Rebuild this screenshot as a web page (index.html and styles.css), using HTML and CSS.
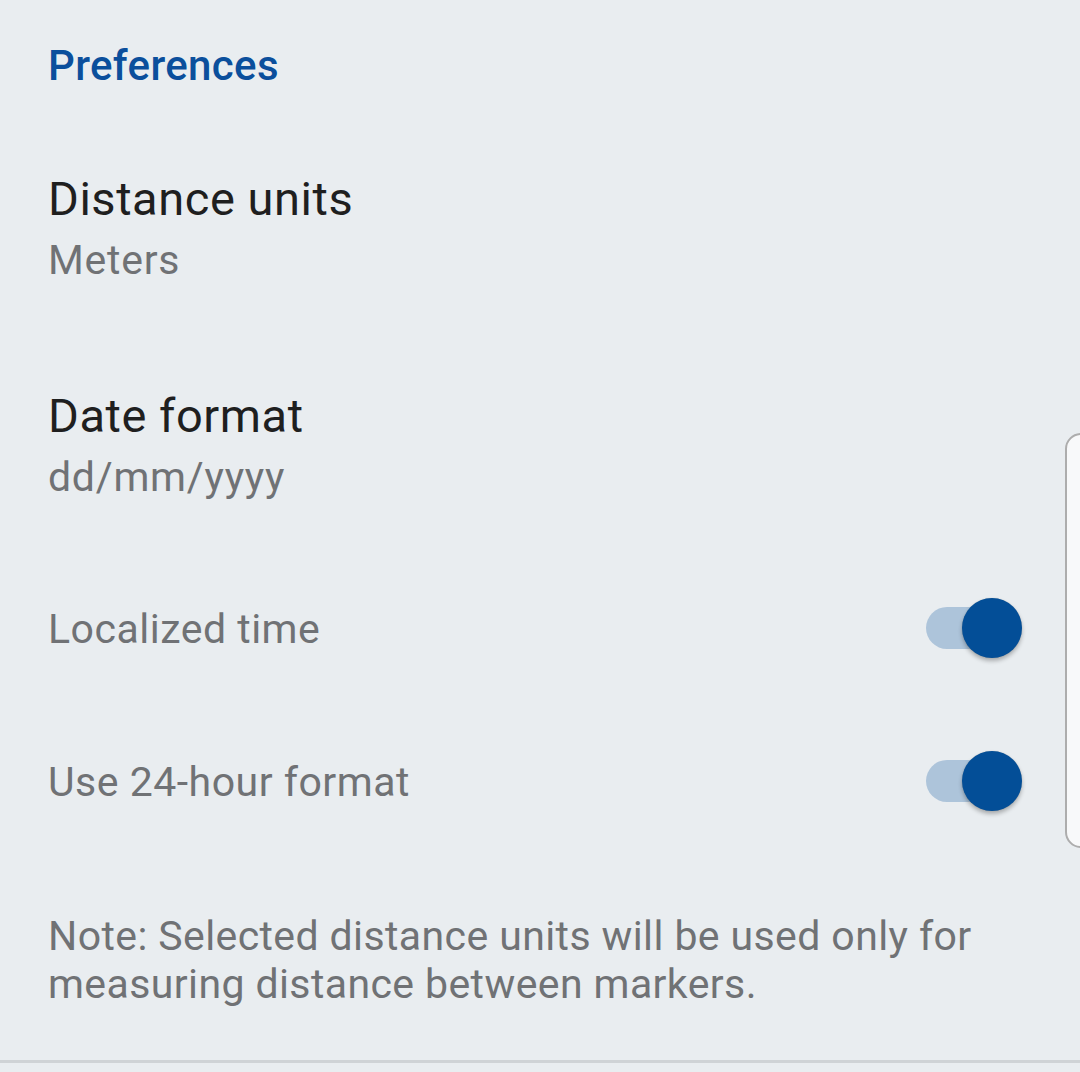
FILE: index.html
```html
<!DOCTYPE html>
<html lang="en">
<head>
<meta charset="utf-8">
<title>Preferences</title>
<link rel="stylesheet" href="styles.css">
</head>
<body>
<main class="screen">
  <h2 class="section-title">Preferences</h2>

  <div class="pref pref-distance">
    <div class="pref-title">Distance units</div>
    <div class="pref-summary">Meters</div>
  </div>

  <div class="pref pref-date">
    <div class="pref-title">Date format</div>
    <div class="pref-summary">dd/mm/yyyy</div>
  </div>

  <div class="switch-row switch-row-first">
    <span class="switch-label">Localized time</span>
    <span class="switch on"><span class="track"></span><span class="thumb"></span></span>
  </div>

  <div class="switch-row switch-row-second">
    <span class="switch-label">Use 24-hour format</span>
    <span class="switch on"><span class="track"></span><span class="thumb"></span></span>
  </div>

  <p class="note">Note: Selected distance units will be used only for measuring distance between markers.</p>

  <div class="divider"></div>

  <div class="edge-panel"></div>
</main>
</body>
</html>
```

FILE: styles.css
```css
html, body {
  margin: 0;
  padding: 0;
  background: #e9edf0;
}

.screen {
  position: relative;
  width: 1080px;
  height: 1072px;
  overflow: hidden;
  font-family: Roboto, "Noto Sans", "Liberation Sans", sans-serif;
  background: #e9edf0;
}

.section-title {
  margin: 0;
  padding: 41px 0 0 48px;
  font-size: 42px;
  line-height: 50px;
  font-weight: 500;
  letter-spacing: 0.36px;
  color: #0b4f9c;
}

.pref {
  padding-left: 48px;
}

.pref-distance {
  margin-top: 80px;
}

.pref-date {
  margin-top: 104px;
}

.pref-title {
  font-size: 47px;
  line-height: 56px;
  letter-spacing: 0.55px;
  color: #1f1f1f;
}

.pref-summary {
  margin-top: 9px;
  font-size: 41px;
  line-height: 48px;
  letter-spacing: 0.75px;
  color: #707275;
}

.switch-row {
  display: flex;
  align-items: center;
  justify-content: space-between;
  height: 60px;
  padding: 0 58px 0 48px;
}

.switch-row-first {
  margin-top: 97px;
}

.switch-row-second {
  margin-top: 93px;
}

.switch-label {
  padding-top: 2px;
  font-size: 41px;
  line-height: 48px;
  letter-spacing: 0.5px;
  color: #707275;
}

.switch {
  position: relative;
  display: block;
  width: 96px;
  height: 60px;
}

.switch .track {
  position: absolute;
  left: 0;
  top: 9px;
  width: 84px;
  height: 42px;
  border-radius: 21px;
  background: #adc4da;
}

.switch .thumb {
  position: absolute;
  right: 0;
  top: 0;
  width: 60px;
  height: 60px;
  border-radius: 50%;
  background: #034e97;
  box-shadow: 0 3px 4px rgba(0, 0, 0, 0.28), 0 0 1px rgba(0, 0, 0, 0.2);
}

.note {
  margin: 101px 0 0;
  padding: 0 60px 0 48px;
  font-size: 41px;
  line-height: 48px;
  letter-spacing: 0.4px;
  color: #707275;
}

.divider {
  margin-top: 52px;
  height: 3px;
  background: #cfd3d6;
}

.edge-panel {
  position: absolute;
  left: 1065px;
  top: 433px;
  width: 40px;
  height: 411px;
  border: 2px solid #adadad;
  border-radius: 16px;
  background: #f8f9fa;
}
```
